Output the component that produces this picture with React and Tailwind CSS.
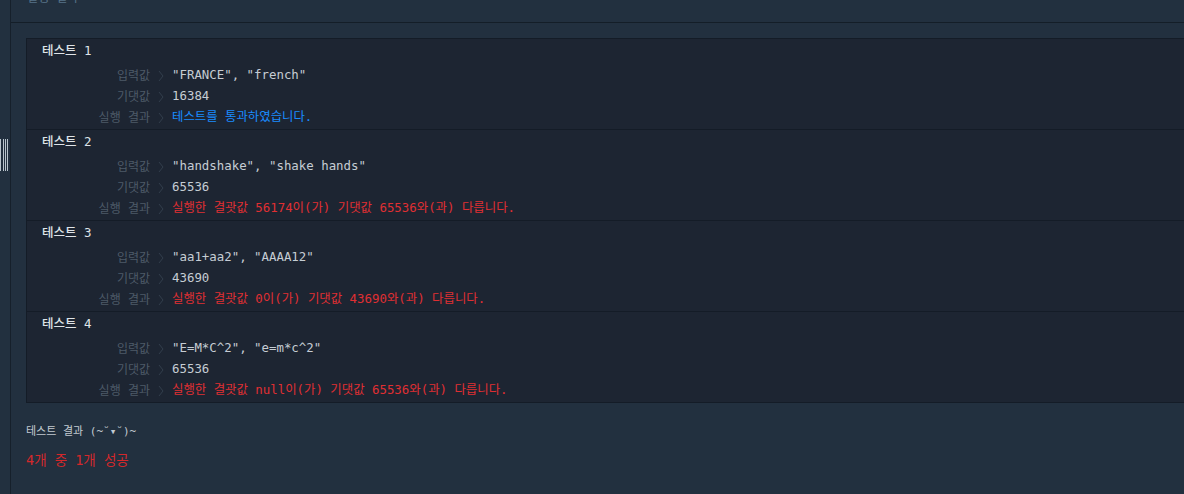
import React from 'react';

const TESTS = [
  { n: 1, input: '"FRANCE", "french"', expected: '16384', ok: true, result: '테스트를 통과하였습니다.' },
  { n: 2, input: '"handshake", "shake hands"', expected: '65536', ok: false, result: '실행한 결괏값 56174이(가) 기댓값 65536와(과) 다릅니다.' },
  { n: 3, input: '"aa1+aa2", "AAAA12"', expected: '43690', ok: false, result: '실행한 결괏값 0이(가) 기댓값 43690와(과) 다릅니다.' },
  { n: 4, input: '"E=M*C^2", "e=m*c^2"', expected: '65536', ok: false, result: '실행한 결괏값 null이(가) 기댓값 65536와(과) 다릅니다.' },
];

const mono = { fontFamily: '"DejaVu Sans Mono", "Noto Sans CJK KR", monospace' };

function Chevron() {
  return (
    <svg width="6" height="12" viewBox="0 0 6 12" className="mx-[8px] shrink-0">
      <path d="M1 1 L5 6 L1 11" fill="none" stroke="#323e4c" strokeWidth="1" />
    </svg>
  );
}

function Row({ label, children }) {
  return (
    <div className="flex items-center h-[21px]">
      <div className="w-[108px] text-right text-[#4d5a68] whitespace-pre">{label}</div>
      <Chevron />
      <div className="whitespace-pre text-[12.4px]">{children}</div>
    </div>
  );
}

function TestBlock({ t, first }) {
  return (
    <div className={`pt-[2px] pb-[1px] pl-[15px] ${first ? '' : 'border-t border-[#141c27]'}`}>
      <div className="h-[20px] leading-[20px] text-[#dfe4e8] font-medium text-[12.5px]">테스트 {t.n}</div>
      <div className="mt-[4px]">
        <Row label="입력값"><span className="text-[#c6cdd4]">{t.input}</span></Row>
        <Row label="기댓값"><span className="text-[#c6cdd4]">{t.expected}</span></Row>
        <Row label="실행 결과">
          <span className={t.ok ? 'text-[#1a8cff]' : 'text-[#e02f32]'}>{t.result}</span>
        </Row>
      </div>
    </div>
  );
}

export default function App() {
  return (
    <div className="flex w-[1184px] h-[494px] overflow-hidden bg-[#22303f] text-[12px]" style={mono}>
      <div className="w-[11px] shrink-0 border-r border-[#16202b] flex flex-col">
        <div className="h-[139px]" />
        <div className="flex h-[32px]">
          <div className="w-px bg-[#b9c4cc]" />
          <div className="w-px ml-[2px] bg-[#b9c4cc]" />
          <div className="w-px ml-[1px] bg-[#b9c4cc]" />
          <div className="w-px ml-[1px] bg-[#b9c4cc]" />
        </div>
      </div>
      <div className="flex-1 flex flex-col">
        <div className="h-[23px] border-b border-[#141e28] overflow-hidden pl-[16px]">
          <div className="-mt-[12px] leading-[20px] text-[#587489]">실행 결과</div>
        </div>
        <div className="pl-[15px] pt-[15px]">
          <div className="bg-[#1d2532] border-t border-b border-l border-[#141c27]">
            {TESTS.map((t, i) => <TestBlock key={t.n} t={t} first={i === 0} />)}
          </div>
          <div className="mt-[21px] text-[11px] leading-[16px] text-[#c3cad1]">테스트 결과 (~˘▾˘)~</div>
          <div className="mt-[10px] text-[13.5px] leading-[20px] text-[#d4282b]">4개 중 1개 성공</div>
        </div>
      </div>
    </div>
  );
}
